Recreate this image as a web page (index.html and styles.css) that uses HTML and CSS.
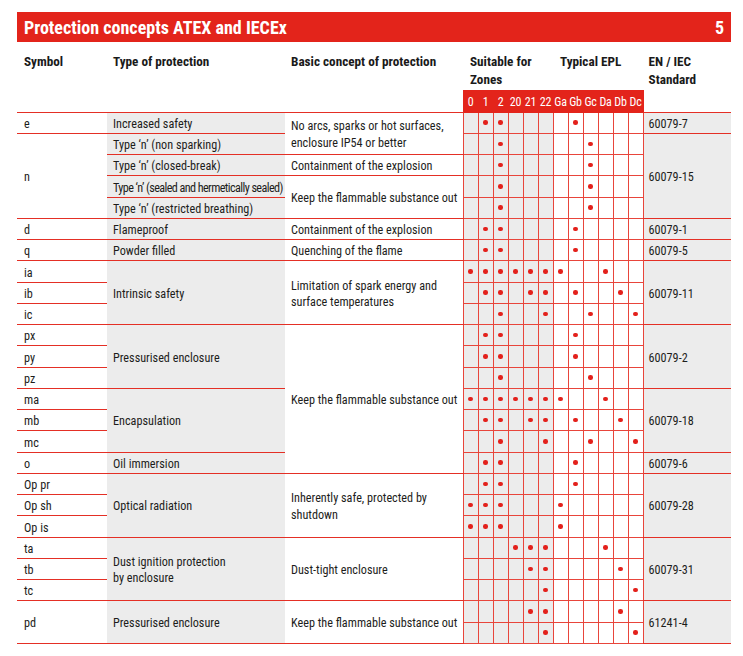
FILE: index.html
```html
<!DOCTYPE html>
<html lang="en">
<head>
<meta charset="utf-8">
<title>Protection concepts ATEX and IECEx</title>
<link rel="stylesheet" href="styles.css">
</head>
<body>
<div class="page">
  <div class="titlebar">
    <h1 class="title">Protection concepts ATEX and IECEx</h1>
    <span class="pagenum">5</span>
  </div>
  <table class="pt">
    <colgroup>
      <col class="c-sym"><col class="c-type"><col class="c-basic">
      <col class="c-z" span="6"><col class="c-e" span="6"><col class="c-std">
    </colgroup>
    <thead>
      <tr class="h1">
        <th rowspan="2" class="hs">Symbol</th>
        <th rowspan="2">Type of protection</th>
        <th rowspan="2">Basic concept of protection</th>
        <th colspan="6" class="hm">Suitable for<br>Zones</th>
        <th colspan="6" class="hm">Typical EPL</th>
        <th rowspan="2" class="hstd">EN / IEC<br>Standard</th>
      </tr>
      <tr class="h2">
        <th>0</th><th>1</th><th>2</th><th>20</th><th>21</th><th>22</th><th>Ga</th><th>Gb</th><th>Gc</th><th>Da</th><th>Db</th><th>Dc</th>
      </tr>
    </thead>
    <tbody>
      <tr>
        <td class="sym">e</td><td class="ty">Increased safety</td><td class="bc" rowspan="2">No arcs, sparks or hot surfaces,<br>enclosure IP54 or better</td>
        <td></td><td class="d"></td><td class="d"></td><td></td><td></td><td></td><td></td><td class="d"></td><td></td><td></td><td></td><td></td>
        <td class="std">60079-7</td>
      </tr>
      <tr>
        <td class="sym" rowspan="4">n</td><td class="ty">Type ‘n’ (non sparking)</td>
        <td></td><td></td><td class="d"></td><td></td><td></td><td></td><td></td><td></td><td class="d"></td><td></td><td></td><td></td>
        <td class="std" rowspan="4">60079-15</td>
      </tr>
      <tr>
        <td class="ty">Type ‘n’ (closed-break)</td><td class="bc">Containment of the explosion</td>
        <td></td><td></td><td class="d"></td><td></td><td></td><td></td><td></td><td></td><td class="d"></td><td></td><td></td><td></td>
      </tr>
      <tr>
        <td class="ty tight">Type ‘n’ (sealed and hermetically sealed)</td><td class="bc" rowspan="2">Keep the flammable substance out</td>
        <td></td><td></td><td class="d"></td><td></td><td></td><td></td><td></td><td></td><td class="d"></td><td></td><td></td><td></td>
      </tr>
      <tr>
        <td class="ty">Type ‘n’ (restricted breathing)</td>
        <td></td><td></td><td class="d"></td><td></td><td></td><td></td><td></td><td></td><td class="d"></td><td></td><td></td><td></td>
      </tr>
      <tr>
        <td class="sym">d</td><td class="ty">Flameproof</td><td class="bc">Containment of the explosion</td>
        <td></td><td class="d"></td><td class="d"></td><td></td><td></td><td></td><td></td><td class="d"></td><td></td><td></td><td></td><td></td>
        <td class="std">60079-1</td>
      </tr>
      <tr>
        <td class="sym">q</td><td class="ty">Powder filled</td><td class="bc">Quenching of the flame</td>
        <td></td><td class="d"></td><td class="d"></td><td></td><td></td><td></td><td></td><td class="d"></td><td></td><td></td><td></td><td></td>
        <td class="std">60079-5</td>
      </tr>
      <tr>
        <td class="sym">ia</td><td class="ty" rowspan="3">Intrinsic safety</td><td class="bc" rowspan="3">Limitation of spark energy and<br>surface temperatures</td>
        <td class="d"></td><td class="d"></td><td class="d"></td><td class="d"></td><td class="d"></td><td class="d"></td><td class="d"></td><td></td><td></td><td class="d"></td><td></td><td></td>
        <td class="std" rowspan="3">60079-11</td>
      </tr>
      <tr>
        <td class="sym">ib</td>
        <td></td><td class="d"></td><td class="d"></td><td></td><td class="d"></td><td class="d"></td><td></td><td class="d"></td><td></td><td></td><td class="d"></td><td></td>
      </tr>
      <tr>
        <td class="sym">ic</td>
        <td></td><td></td><td class="d"></td><td></td><td></td><td class="d"></td><td></td><td></td><td class="d"></td><td></td><td></td><td class="d"></td>
      </tr>
      <tr>
        <td class="sym">px</td><td class="ty" rowspan="3">Pressurised enclosure</td><td class="bc" rowspan="7">Keep the flammable substance out</td>
        <td></td><td class="d"></td><td class="d"></td><td></td><td></td><td></td><td></td><td class="d"></td><td></td><td></td><td></td><td></td>
        <td class="std" rowspan="3">60079-2</td>
      </tr>
      <tr>
        <td class="sym">py</td>
        <td></td><td class="d"></td><td class="d"></td><td></td><td></td><td></td><td></td><td class="d"></td><td></td><td></td><td></td><td></td>
      </tr>
      <tr>
        <td class="sym">pz</td>
        <td></td><td></td><td class="d"></td><td></td><td></td><td></td><td></td><td></td><td class="d"></td><td></td><td></td><td></td>
      </tr>
      <tr>
        <td class="sym">ma</td><td class="ty" rowspan="3">Encapsulation</td>
        <td class="d"></td><td class="d"></td><td class="d"></td><td class="d"></td><td class="d"></td><td class="d"></td><td class="d"></td><td></td><td></td><td class="d"></td><td></td><td></td>
        <td class="std" rowspan="3">60079-18</td>
      </tr>
      <tr>
        <td class="sym">mb</td>
        <td></td><td class="d"></td><td class="d"></td><td></td><td class="d"></td><td class="d"></td><td></td><td class="d"></td><td></td><td></td><td class="d"></td><td></td>
      </tr>
      <tr>
        <td class="sym">mc</td>
        <td></td><td></td><td class="d"></td><td></td><td></td><td class="d"></td><td></td><td></td><td class="d"></td><td></td><td></td><td class="d"></td>
      </tr>
      <tr>
        <td class="sym">o</td><td class="ty">Oil immersion</td>
        <td></td><td class="d"></td><td class="d"></td><td></td><td></td><td></td><td></td><td class="d"></td><td></td><td></td><td></td><td></td>
        <td class="std">60079-6</td>
      </tr>
      <tr>
        <td class="sym">Op pr</td><td class="ty" rowspan="3">Optical radiation</td><td class="bc" rowspan="3">Inherently safe, protected by<br>shutdown</td>
        <td></td><td class="d"></td><td class="d"></td><td></td><td></td><td></td><td></td><td class="d"></td><td></td><td></td><td></td><td></td>
        <td class="std" rowspan="3">60079-28</td>
      </tr>
      <tr>
        <td class="sym">Op sh</td>
        <td class="d"></td><td class="d"></td><td class="d"></td><td></td><td></td><td></td><td class="d"></td><td></td><td></td><td></td><td></td><td></td>
      </tr>
      <tr>
        <td class="sym">Op is</td>
        <td class="d"></td><td class="d"></td><td class="d"></td><td></td><td></td><td></td><td class="d"></td><td></td><td></td><td></td><td></td><td></td>
      </tr>
      <tr>
        <td class="sym">ta</td><td class="ty" rowspan="3">Dust ignition protection<br>by enclosure</td><td class="bc" rowspan="3">Dust-tight enclosure</td>
        <td></td><td></td><td></td><td class="d"></td><td class="d"></td><td class="d"></td><td></td><td></td><td></td><td class="d"></td><td></td><td></td>
        <td class="std" rowspan="3">60079-31</td>
      </tr>
      <tr>
        <td class="sym">tb</td>
        <td></td><td></td><td></td><td></td><td class="d"></td><td class="d"></td><td></td><td></td><td></td><td></td><td class="d"></td><td></td>
      </tr>
      <tr>
        <td class="sym">tc</td>
        <td></td><td></td><td></td><td></td><td></td><td class="d"></td><td></td><td></td><td></td><td></td><td></td><td class="d"></td>
      </tr>
      <tr>
        <td class="sym" rowspan="2">pd</td><td class="ty" rowspan="2">Pressurised enclosure</td><td class="bc" rowspan="2">Keep the flammable substance out</td>
        <td></td><td></td><td></td><td></td><td class="d"></td><td class="d"></td><td></td><td></td><td></td><td></td><td class="d"></td><td></td>
        <td class="std" rowspan="2">61241-4</td>
      </tr>
      <tr>
        <td></td><td></td><td></td><td></td><td></td><td class="d"></td><td></td><td></td><td></td><td></td><td></td><td class="d"></td>
      </tr>
    </tbody>
  </table>
</div>
</body>
</html>
```
FILE: styles.css
```css
* { box-sizing: border-box; }

body {
  margin: 0;
  background: #ffffff;
  font-family: "Roboto Condensed", "Liberation Sans", Arial, sans-serif;
  color: #1d1d1b;
}

.page {
  padding: 12px 0 0 17px;
  width: 731px;
}

.titlebar {
  display: flex;
  justify-content: space-between;
  align-items: center;
  width: 714px;
  height: 30px;
  padding: 1px 7px 0;
  background: #e3241b;
  color: #ffffff;
}

.title {
  margin: 0;
  font-size: 18px;
  font-weight: 700;
  line-height: 1;
}

.pagenum {
  font-size: 18px;
  font-weight: 700;
  line-height: 1;
}

.pt {
  border-collapse: collapse;
  table-layout: fixed;
  width: 714px;
  font-size: 12.2px;
}

.c-sym { width: 90px; }
.c-type { width: 178px; background: #ececec; }
.c-basic { width: 178px; }
.c-z { width: 15px; background: #ececec; }
.c-e { width: 15px; }
.c-std { width: 88px; background: #ececec; }

.h1 th {
  height: 48px;
  padding: 11px 0 0 6px;
  vertical-align: top;
  text-align: left;
  font-size: 13.2px;
  font-weight: 700;
  line-height: 17.5px;
  color: #1a1a1a;
  background: #ffffff;
  border: none;
  border-bottom: 1px solid #e42f25;
}

.h1 th.hs { padding-left: 7px; }
.h1 th.hm { padding-left: 7px; border-bottom: none; }
.h1 th.hstd { padding-left: 5px; }

.h2 th {
  height: 22px;
  padding: 1px 0 0;
  text-align: center;
  vertical-align: middle;
  font-size: 12px;
  font-weight: 400;
  color: #ffffff;
  background: #e3241b;
  border: 1px solid #e3241b;
  white-space: nowrap;
  letter-spacing: -0.2px;
}

.pt tbody tr { height: 21.26px; }

.pt td {
  padding: 0;
  border: 1px solid #e8453b;
  vertical-align: middle;
  line-height: 16.5px;
}

.pt td.sym,
.pt td.ty,
.pt td.bc,
.pt td.std {
  border-left: none;
  border-right: none;
  border-top: 1px solid #e42f25;
  border-bottom: 1px solid #e42f25;
  padding: 3px 4px 0 6px;
  white-space: nowrap;
}

.pt td.sym { padding-left: 7px; }
.pt td.std { padding-left: 5px; }

.tight { letter-spacing: -0.6px; }

.pt td.d::after {
  content: "";
  display: block;
  width: 4.5px;
  height: 4.5px;
  margin: 0 auto;
  border-radius: 50%;
  background: #e3201b;
}
```
